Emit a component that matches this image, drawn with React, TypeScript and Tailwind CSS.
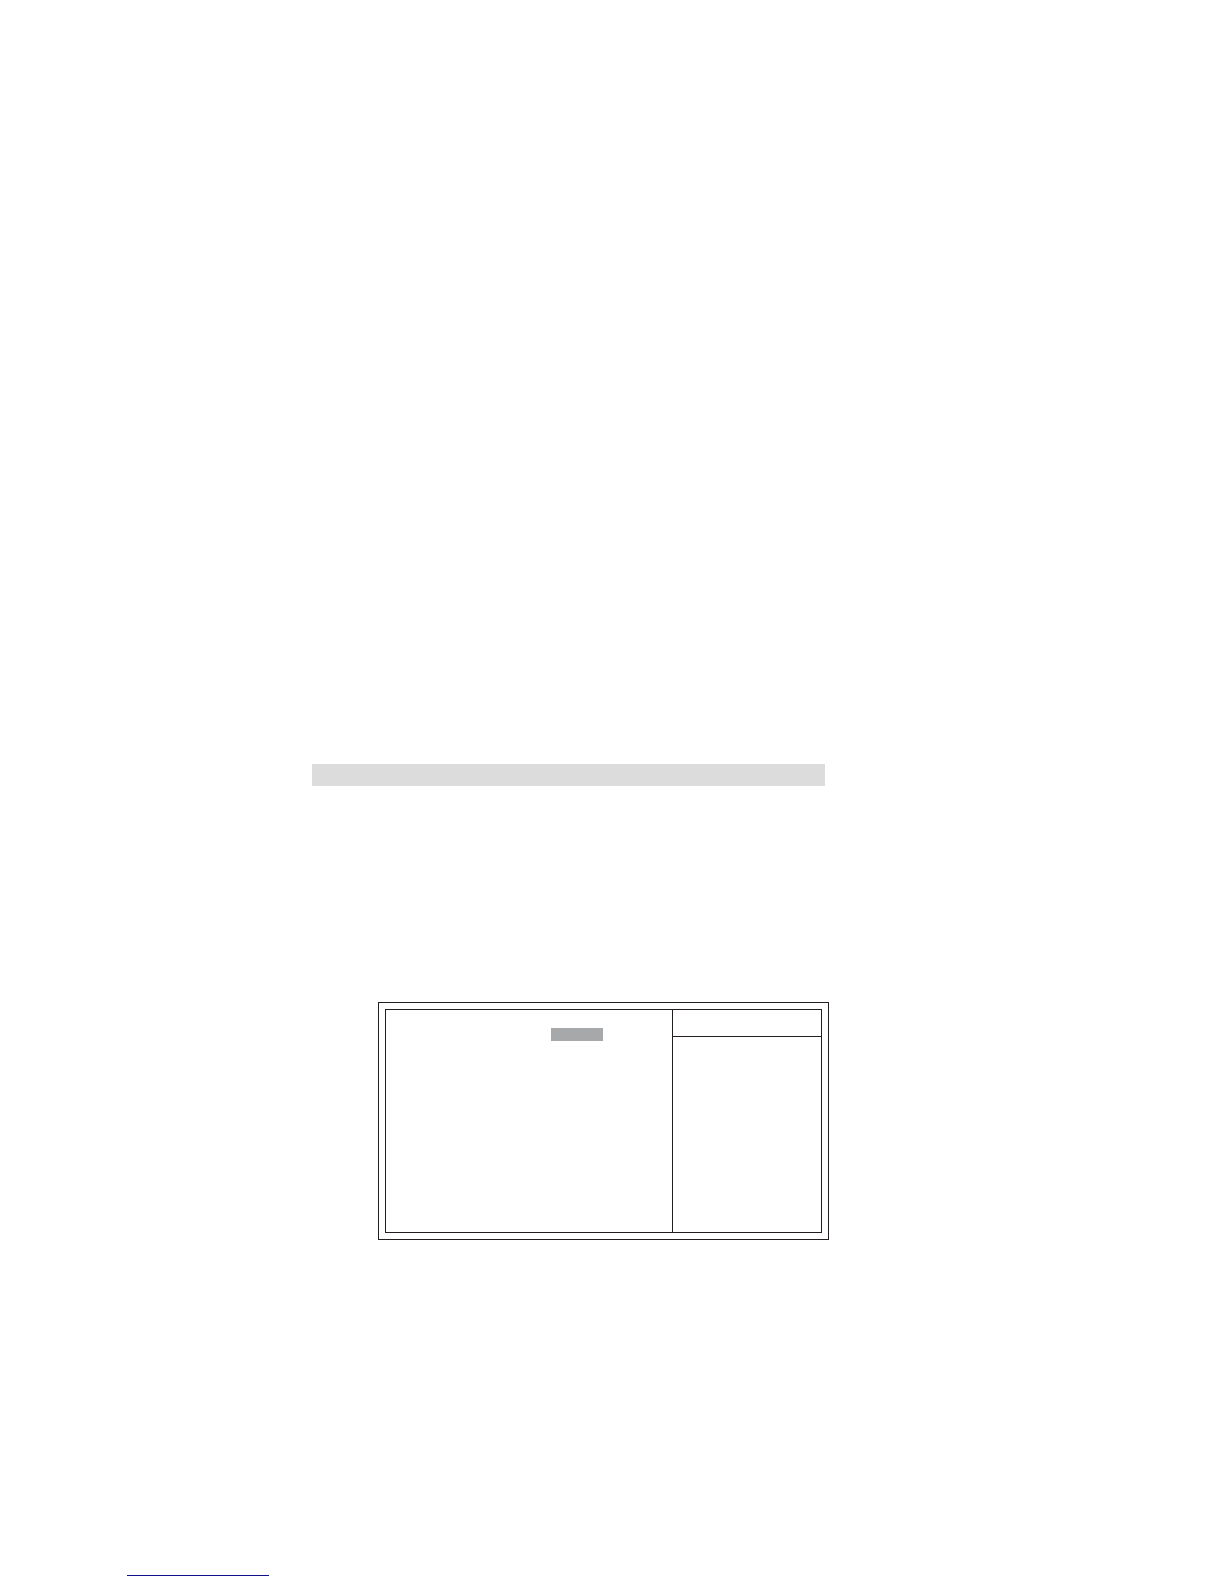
function SectionBar() {
  return <div className="mr-1 h-[22px] bg-[#dcdcdd]" />;
}

function SetupScreen() {
  return (
    <section className="ml-[66px] mt-[216px] border border-[#231f20] p-1.5">
      <div className="flex min-h-56 border border-[#231f20]">
        <div className="flex-1 pl-[165px] pt-[18px]">
          <div className="h-[13px] w-[52px] bg-[#a7a8a9]" />
        </div>
        <aside className="w-[149px] border-l border-[#231f20]">
          <div className="h-[27px] border-b border-[#231f20]" />
        </aside>
      </div>
    </section>
  );
}

export default function App() {
  return (
    <div className="flex min-h-screen flex-col bg-white">
      <main className="pl-[312px] pr-[395px] pt-[764px]">
        <SectionBar />
        <SetupScreen />
      </main>
      <footer className="mt-auto pb-2 pl-[127px]">
        <div className="w-[142px] border-b border-[#10108a]" />
      </footer>
    </div>
  );
}
